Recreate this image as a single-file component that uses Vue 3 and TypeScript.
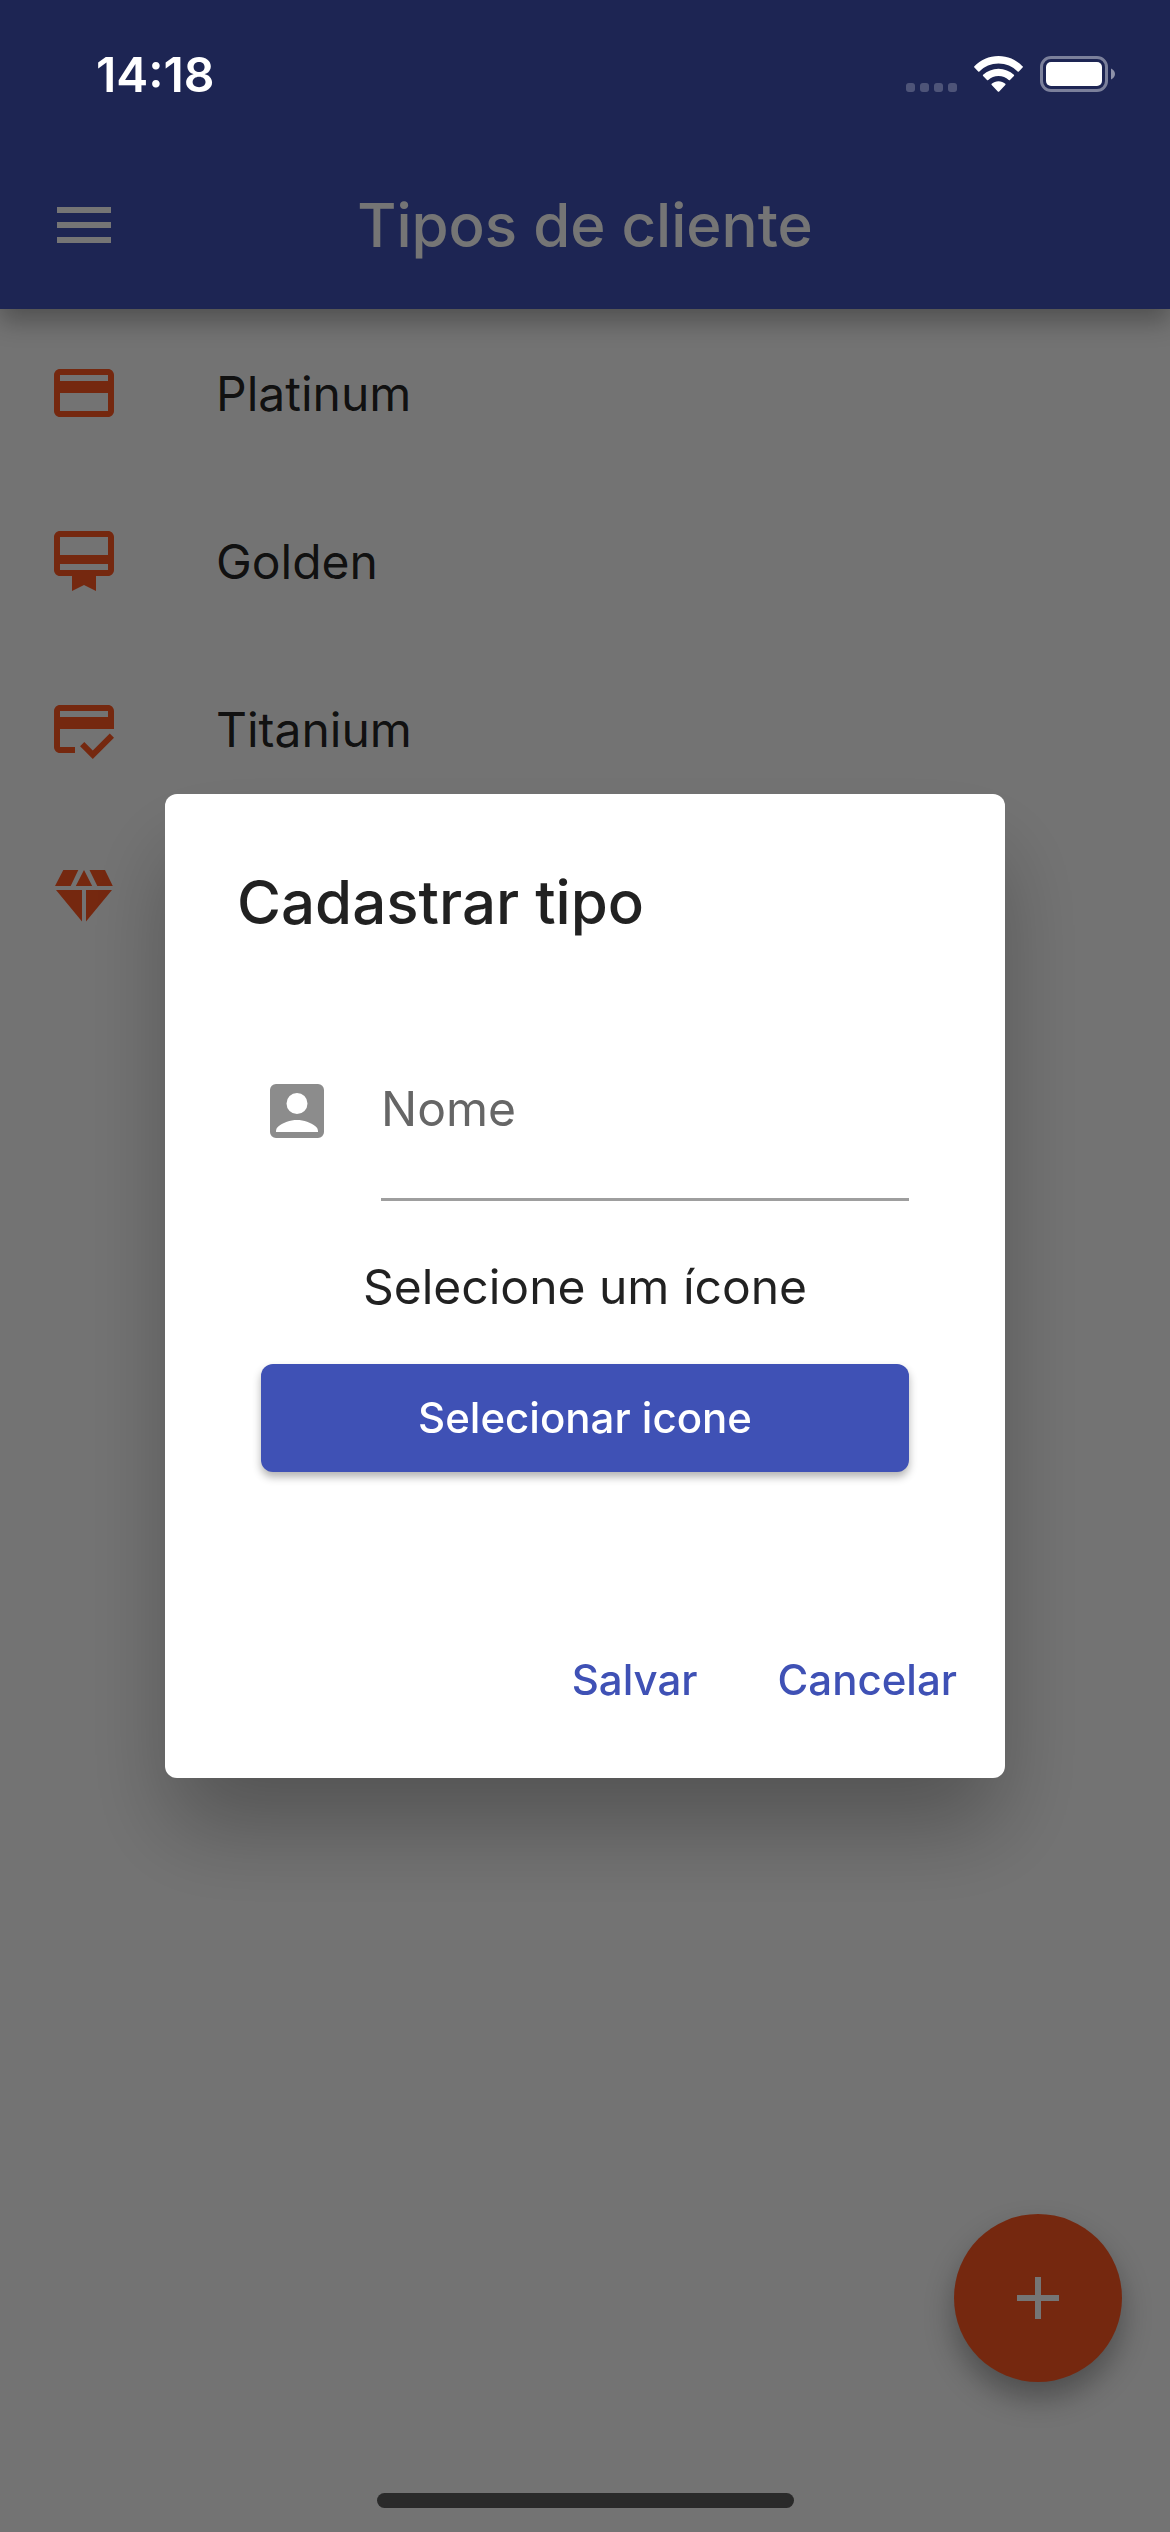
<script setup lang="ts">
import { ref } from 'vue'

interface ClientType {
  name: string
  viewBox: string
  path: string
}

const types: ClientType[] = [
  {
    name: 'Platinum',
    viewBox: '0 0 24 24',
    path: 'M20 4H4c-1.11 0-1.99.89-1.99 2L2 18c0 1.11.89 2 2 2h16c1.11 0 2-.89 2-2V6c0-1.11-.89-2-2-2zm0 14H4v-6h16v6zm0-10H4V6h16v2z',
  },
  {
    name: 'Golden',
    viewBox: '0 0 24 24',
    path: 'M20 2H4c-1.11 0-2 .89-2 2v11c0 1.11.89 2 2 2h4v5l4-2 4 2v-5h4c1.11 0 2-.89 2-2V4c0-1.11-.89-2-2-2zm0 13H4v-2h16v2zm0-5H4V4h16v6z',
  },
  {
    name: 'Titanium',
    viewBox: '0 0 24 24',
    path: 'M20 4H4c-1.11 0-1.99.89-1.99 2L2 18c0 1.11.89 2 2 2h5v-2H4v-6h18V6c0-1.11-.89-2-2-2zm0 4H4V6h16v2zM14.93 19.17l-2.83-2.83-1.41 1.41L14.93 22 22 14.93l-1.41-1.41z',
  },
  {
    name: '',
    viewBox: '0 0 72 72',
    path: 'M15.3 9h15L22.7 25H7zM36 9l8.2 16H27.8zM41.5 9H57l7.8 16H49.3zM8 29h26v31.5zM38 29h26L38 60.5z',
  },
]

const name = ref('')
</script>

<template>
  <div class="screen">
    <header class="app-bar">
      <button class="menu" type="button" aria-label="Menu">
        <svg class="icon" viewBox="0 0 24 24"><path d="M3 18h18v-2H3v2zm0-5h18v-2H3v2zm0-7v2h18V6H3z" /></svg>
      </button>
      <h1 class="app-title">Tipos de cliente</h1>
    </header>

    <ul class="types">
      <li v-for="(type, index) in types" :key="index" class="type">
        <svg class="icon" :viewBox="type.viewBox" aria-hidden="true"><path :d="type.path" /></svg>
        <span v-if="type.name">{{ type.name }}</span>
      </li>
    </ul>

    <button class="fab" type="button" aria-label="Adicionar">
      <svg class="icon" viewBox="0 0 24 24"><path d="M19 13h-6v6h-2v-6H5v-2h6V5h2v6h6v2z" /></svg>
    </button>

    <div class="scrim">
      <form class="dialog" role="dialog" aria-labelledby="dialog-title" @submit.prevent>
        <h2 id="dialog-title" class="dialog-title">Cadastrar tipo</h2>
        <div class="content">
          <label class="field">
            <svg class="icon field-icon" viewBox="0 0 24 24" aria-hidden="true">
              <path
                fill-rule="evenodd"
                d="M5 3h14a2 2 0 0 1 2 2v14a2 2 0 0 1-2 2H5a2 2 0 0 1-2-2V5a2 2 0 0 1 2-2zM12 6a3.5 3.5 0 1 0 0 7 3.5 3.5 0 0 0 0-7zM19 19H5v-.23c0-.62.28-1.2.76-1.58C7.47 15.82 9.64 15 12 15s4.53.82 6.24 2.19c.48.38.76.97.76 1.58V19z"
              />
            </svg>
            <input v-model="name" class="input" type="text" placeholder="Nome" aria-label="Nome" />
          </label>
          <p class="caption">Selecione um ícone</p>
          <button class="select" type="button">Selecionar icone</button>
        </div>
        <div class="actions">
          <button class="action" type="submit">Salvar</button>
          <button class="action" type="button">Cancelar</button>
        </div>
      </form>
    </div>

    <div class="status-bar">
      <span class="time">14:18</span>
      <div class="indicators">
        <svg class="dots" width="51" height="9" viewBox="0 0 51 9">
          <rect width="9" height="9" rx="3" /><rect x="14" width="9" height="9" rx="3" />
          <rect x="28" width="9" height="9" rx="3" /><rect x="42" width="9" height="9" rx="3" />
        </svg>
        <svg class="wifi" width="49" height="36" viewBox="0 0 49 36">
          <path d="M24.5 0C34 0 42.5 4 48.6 10.3q.6.7 0 1.3L44.8 15.5q-.6.6-1.2 0C38.5 10.6 32 7.6 24.5 7.6S10.5 10.6 5.4 15.5q-.6.6-1.2 0L.4 11.6q-.6-.6 0-1.3C6.5 4 15 0 24.5 0z" />
          <path d="M24.5 12.7c6 0 11.3 2.3 15.4 6.1q.6.7 0 1.3L36 24q-.6.6-1.3 0c-2.8-2.4-6.2-3.9-10.2-3.9S17.1 21.6 14.3 24q-.7.6-1.3 0L9.1 20.1q-.6-.6 0-1.3c4.1-3.8 9.4-6.1 15.4-6.1z" />
          <path d="M24.5 25.3c2.6 0 4.9.9 6.8 2.4q.6.6 0 1.2L25.2 35.5q-.7.7-1.4 0L17.7 28.9q-.6-.6 0-1.2c1.9-1.5 4.2-2.4 6.8-2.4z" />
        </svg>
        <svg width="76" height="36" viewBox="0 0 76 36">
          <rect class="battery-shell" x="1.5" y="1.5" width="65" height="33" rx="9.5" />
          <rect x="6" y="6" width="56" height="24" rx="5" />
          <path class="battery-cap" d="M71 12.5c2.4 1 4 3 4 5.500s-1.600 4.500-4 5.500z" />
        </svg>
      </div>
    </div>
    <div class="home-indicator"></div>
  </div>
</template>

<style>
body {
  margin: 0;
}
</style>

<style scoped>
.screen {
  position: relative;
  min-height: 100vh;
  background: #fafafa;
  color: rgba(0, 0, 0, 0.87);
  font-family: Inter, "Liberation Sans", sans-serif;
  font-size: 48px;
}

h1,
h2,
p,
ul {
  margin: 0;
  padding: 0;
}

button {
  border: 0;
  padding: 0;
  background: none;
  font: inherit;
  color: inherit;
}

.icon {
  display: block;
  flex: none;
  width: 72px;
  height: 72px;
  fill: currentColor;
}

.app-bar {
  position: relative;
  display: grid;
  grid-template-columns: 72px 1fr 72px;
  align-items: center;
  height: 168px;
  padding: 141px 48px 0;
  background: #3f51b5;
  color: #fff;
  box-shadow: 0 12px 24px rgba(0, 0, 0, 0.3);
}

.app-title {
  font-size: 60px;
  line-height: 72px;
  font-weight: 500;
  text-align: center;
}

.types {
  list-style: none;
}

.type {
  display: flex;
  align-items: center;
  gap: 96px;
  height: 168px;
  padding: 0 48px;
}

.type .icon {
  color: #ff5722;
}

.fab {
  position: fixed;
  right: 48px;
  bottom: 150px;
  display: grid;
  place-items: center;
  width: 168px;
  height: 168px;
  border-radius: 50%;
  background: #ff5722;
  color: #fff;
  box-shadow: 0 16px 30px rgba(0, 0, 0, 0.32);
}

.scrim {
  position: fixed;
  inset: 0;
  display: flex;
  align-items: center;
  justify-content: center;
  padding: 141px 120px 102px;
  background: rgba(0, 0, 0, 0.54);
}

.dialog {
  width: 840px;
  padding: 72px 24px 44px;
  box-sizing: border-box;
  border-radius: 12px;
  background: #fff;
  box-shadow: 0 54px 90px -6px rgba(0, 0, 0, 0.28);
}

.dialog-title {
  padding: 0 48px;
  font-size: 60px;
  line-height: 72px;
  font-weight: 500;
}

.content {
  display: flex;
  flex-direction: column;
  padding: 137px 72px 154px;
}

.field {
  display: flex;
  gap: 48px;
}

.field-icon {
  color: #8c8c8c;
}

.input {
  flex: 1;
  min-width: 0;
  height: 126px;
  box-sizing: border-box;
  padding: 0 0 56px;
  border: 0;
  border-bottom: 3px solid #9e9e9e;
  outline: 0;
  background: none;
  font: inherit;
  color: inherit;
}

.input::placeholder {
  color: #666;
  opacity: 1;
}

.caption {
  margin: 56px 0 47px;
  line-height: 60px;
  text-align: center;
}

.select {
  height: 108px;
  border-radius: 12px;
  background: #3f51b5;
  color: #fff;
  font-size: 42px;
  font-weight: 500;
  box-shadow: 0 5px 8px rgba(0, 0, 0, 0.3);
}

.actions {
  display: flex;
  justify-content: flex-end;
  gap: 32px;
}

.action {
  height: 108px;
  padding: 0 24px;
  color: #3f51b5;
  font-size: 42px;
  font-weight: 500;
}

.status-bar {
  position: absolute;
  inset: 0 0 auto;
  display: flex;
  align-items: center;
  justify-content: space-between;
  height: 148px;
  padding: 0 54px 0 96px;
  color: #fff;
}

.time {
  font-size: 48px;
  font-weight: 600;
}

.indicators {
  display: flex;
  align-items: flex-end;
  gap: 17px;
  fill: #fff;
}

.dots {
  opacity: 0.22;
}

.battery-shell {
  fill: none;
  stroke: #fff;
  stroke-width: 3;
  opacity: 0.42;
}

.battery-cap {
  opacity: 0.5;
}

.home-indicator {
  position: fixed;
  bottom: 24px;
  left: 50%;
  width: 417px;
  height: 15px;
  margin-left: -208px;
  border-radius: 8px;
  background: #2a2a2a;
}
</style>
